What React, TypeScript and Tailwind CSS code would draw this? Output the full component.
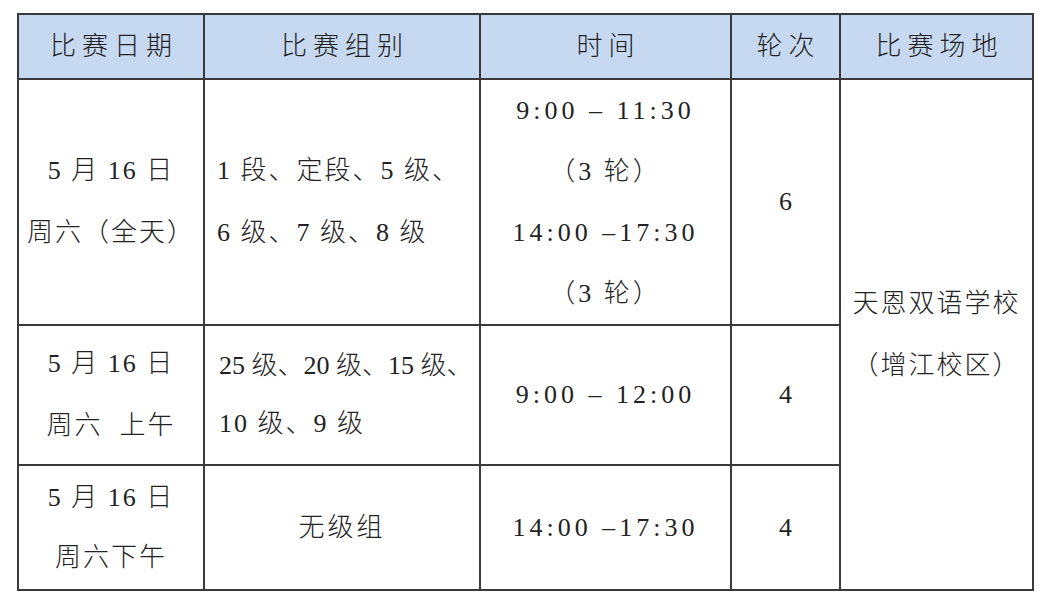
import React from 'react';

const font = "font-['Liberation_Serif','Noto_Sans_CJK_SC',serif]";

const headers = ['比赛日期', '比赛组别', '时间', '轮次', '比赛场地'];

const cell = 'border-2 border-[#3a3a3a] p-0 align-middle';

export default function App() {
  return (
    <div className={`w-[1056px] h-[610px] bg-white pt-[13px] pl-[17px] text-[#222] font-light ${font}`}>
      <table className="table-fixed border-collapse border-2 border-[#3a3a3a] text-[26px]">
        <colgroup>
          <col className="w-[186px]" />
          <col className="w-[276px]" />
          <col className="w-[251px]" />
          <col className="w-[109px]" />
          <col className="w-[193px]" />
        </colgroup>
        <thead>
          <tr className="h-[65px] bg-[#c6d9f1]">
            {headers.map((h) => (
              <th key={h} className={`${cell} font-light text-center tracking-[6px] pl-[6px]`}>
                {h}
              </th>
            ))}
          </tr>
        </thead>
        <tbody className="leading-[62px]">
          <tr className="h-[246px]">
            <td className={`${cell} text-center tracking-[2px]`}>
              <div>5 月 16 日</div>
              <div>周六（全天）</div>
            </td>
            <td className={`${cell} pl-[12px] tracking-[2px]`}>
              <div>1 段、定段、5 级、</div>
              <div>6 级、7 级、8 级</div>
            </td>
            <td className={`${cell} text-center leading-[61px]`}>
              <div className="tracking-[4px]">9:00 – 11:30</div>
              <div className="tracking-[3px]">（3 轮）</div>
              <div className="tracking-[4px]">14:00 –17:30</div>
              <div className="tracking-[3px]">（3 轮）</div>
            </td>
            <td className={`${cell} text-center`}>6</td>
            <td rowSpan={3} className={`${cell} text-center tracking-[2px]`}>
              <div>天恩双语学校</div>
              <div>（增江校区）</div>
            </td>
          </tr>
          <tr className="h-[140px]">
            <td className={`${cell} text-center tracking-[2px]`}>
              <div>5 月 16 日</div>
              <div>周六&nbsp;&nbsp;上午</div>
            </td>
            <td className={`${cell} pl-[14px] leading-[58px]`}>
              <div>25 级、20 级、15 级、</div>
              <div className="tracking-[2px]">10 级、9 级</div>
            </td>
            <td className={`${cell} text-center tracking-[4px]`}>9:00 – 12:00</td>
            <td className={`${cell} text-center`}>4</td>
          </tr>
          <tr className="h-[125px]">
            <td className={`${cell} text-center leading-[60px] tracking-[2px]`}>
              <div>5 月 16 日</div>
              <div>周六下午</div>
            </td>
            <td className={`${cell} text-center tracking-[3px]`}>无级组</td>
            <td className={`${cell} text-center tracking-[4px]`}>14:00 –17:30</td>
            <td className={`${cell} text-center`}>4</td>
          </tr>
        </tbody>
      </table>
    </div>
  );
}
